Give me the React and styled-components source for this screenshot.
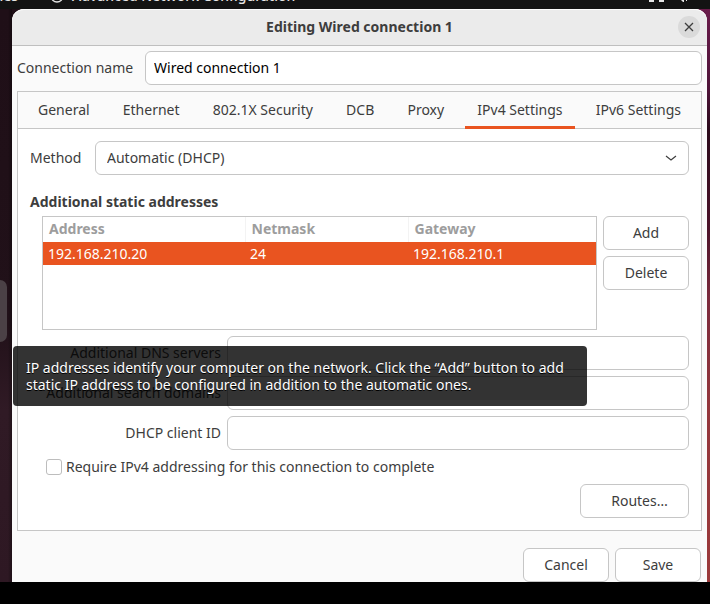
import React from "react";
import styled, { createGlobalStyle } from "styled-components";

const c = {
  text: "#3d3d3d",
  line: "#c6c6c6",
  accent: "#e95420",
  dim: "#9d9d9d",
};

const GlobalStyle = createGlobalStyle`
  * { box-sizing: border-box; }
  body {
    margin: 0;
    background: #000;
    color: ${c.text};
    font: 14px/20px "Noto Sans", "Open Sans", sans-serif;
    overflow: hidden;
  }
  button, input, select { font: inherit; color: inherit; margin: 0; }
`;

const TopBar = styled.header`
  display: flex;
  align-items: flex-end;
  height: 9px;
  overflow: hidden;
  background: #131313;
  color: #e6e6e6;
  font-weight: 500;
  padding-bottom: 3px;
`;

const Activities = styled.span`
  width: 50px;
  direction: rtl;
  padding-right: 32px;
  white-space: nowrap;
`;

const AppName = styled.span`
  display: flex;
  align-items: center;
  gap: 8px;
  flex: 1;
`;

const StatusIcons = styled.span`
  display: flex;
  align-items: flex-end;
  width: 63px;
  height: 20px;
  padding-bottom: 4px;
`;

const Desktop = styled.main`
  display: grid;
  grid-template-columns: 12px minmax(0, 1fr) 3px;
  background:
    linear-gradient(#6a1c4b 0, #4f1439 80px, #2b0a1b 120px, #4b1229 220px, #7b2a3c 290px, #93363b 400px, #9a393a 100%) right / 20px 100% no-repeat,
    linear-gradient(#1f0f17 0, #211119 55%, #301a25 70%, #2e1823 100%);
`;

const Dock = styled.aside`
  padding-top: 271px;
  background: linear-gradient(90deg, transparent 8px, rgba(0, 0, 0, 0.35));
`;

const DockItem = styled.div`
  width: 7px;
  height: 62px;
  border-radius: 0 8px 8px 0;
  background: #4b4146;
`;

const Window = styled.section`
  background: #fafafa;
  border-radius: 12px 12px 0 0;
`;

const TitleBar = styled.div`
  display: grid;
  grid-template-columns: 29px 1fr 29px;
  align-items: center;
  height: 37px;
  border-bottom: 1px solid #bfbfbf;
  border-radius: 12px 12px 0 0;
  background: #ebebeb;
  box-shadow: inset 0 1px #fbfbfb;
`;

const Title = styled.h1`
  grid-column: 2;
  margin: 0;
  text-align: center;
  font-size: 14px;
  line-height: 20px;
  font-weight: 700;
`;

const CloseButton = styled.button`
  display: grid;
  place-items: center;
  width: 22px;
  height: 22px;
  padding: 0;
  border: 0;
  border-radius: 50%;
  background: #dadada;
`;

const NameRow = styled.div`
  display: grid;
  grid-template-columns: 128px 1fr;
  align-items: center;
  padding: 5px 5px 6px;
`;

const Entry = styled.input`
  width: 100%;
  min-width: 0;
  height: 34px;
  padding: 0 8px 2px;
  border: 1px solid ${c.line};
  border-radius: 6px;
  background: #fff;
  color: #000;
`;

const Notebook = styled.div`
  margin: 0 5px;
  border: 1px solid ${c.line};
  background: #fff;
`;

const TabBar = styled.div`
  display: flex;
  justify-content: space-between;
  height: 37px;
  padding: 0 8px;
  border-bottom: 1px solid ${c.line};
  background: #fafafa;
`;

const Tab = styled.button`
  height: 37px;
  padding: 1px 12px 0;
  border: 0;
  border-bottom: 3px solid ${(p) => (p.$active ? c.accent : "transparent")};
  background: none;
  white-space: nowrap;
`;

const Page = styled.div`
  padding: 12px;
`;

const MethodRow = styled.div`
  display: grid;
  grid-template-columns: 65px 1fr;
  align-items: center;
`;

const SelectBox = styled.div`
  display: grid;
  align-items: center;
  & > * { grid-area: 1 / 1; }
  & > svg { justify-self: end; margin-right: 12px; pointer-events: none; }
`;

const Select = styled.select`
  appearance: none;
  height: 34px;
  width: 100%;
  padding: 0 11px;
  border: 1px solid ${c.line};
  border-radius: 6px;
  background: #fff;
`;

const SectionTitle = styled.h2`
  margin: 17px 0 4px;
  font-size: 14px;
  line-height: 20px;
  font-weight: 700;
`;

const AddressArea = styled.div`
  position: relative;
  display: grid;
  grid-template-columns: 1fr 86px;
  gap: 6px;
  margin-left: 12px;
`;

const TableFrame = styled.div`
  height: 114px;
  border: 1px solid ${c.line};
  background: #fff;
`;

const Table = styled.table`
  width: 100%;
  border-collapse: collapse;
  table-layout: fixed;
`;

const HeadCell = styled.th`
  width: ${(p) => p.$width};
  height: 25px;
  padding: 0 6px 2px;
  border-right: 1px solid ${(p) => (p.$last ? "transparent" : "#f3f3f3")};
  color: ${c.dim};
  text-align: left;
  font-weight: 700;
`;

const Cell = styled.td`
  height: 23px;
  padding: 0 5px;
  background: ${c.accent};
  color: #fff;
`;

const ButtonColumn = styled.div`
  display: flex;
  flex-direction: column;
  gap: 6px;
`;

const Button = styled.button`
  height: 34px;
  min-width: 86px;
  padding: ${(p) => (p.$indent ? "0 18px 0 28px" : "0 8px")};
  ${(p) => p.$indent && "min-width: 109px;"}
  border: 1px solid ${c.line};
  border-radius: 6px;
  background: #fff;
`;

const Tooltip = styled.div`
  position: absolute;
  left: -29px;
  top: 130px;
  width: 574px;
  padding: 13px;
  border-radius: 4px;
  background: rgba(0, 0, 0, 0.8);
  color: #fff;
  line-height: 17px;
  text-shadow: 0 1px #000;
  white-space: nowrap;
`;

const Fields = styled.div`
  display: grid;
  grid-template-columns: 191px 1fr;
  gap: 6px;
  align-items: center;
  margin-top: 6px;
`;

const FieldLabel = styled.label`
  text-align: right;
`;

const CheckRow = styled.label`
  display: flex;
  align-items: center;
  gap: 4px;
  margin: 7px 0 7px 16px;
`;

const CheckBox = styled.input`
  appearance: none;
  width: 16px;
  height: 16px;
  border: 1px solid #bdbdbd;
  border-radius: 3px;
  background: #fff;
`;

const Actions = styled.div`
  display: flex;
  justify-content: flex-end;
  gap: 6px;
  padding: ${(p) => (p.$footer ? "17px 6px 0" : "0")};
`;

const tabs = ["General", "Ethernet", "802.1X Security", "DCB", "Proxy", "IPv4 Settings", "IPv6 Settings"];
const fields = [
  ["dns", "Additional DNS servers"],
  ["search", "Additional search domains"],
  ["client", "DHCP client ID"],
];

export default function App() {
  return (
    <>
      <GlobalStyle />
      <TopBar>
        <Activities>Activities</Activities>
        <AppName>
          <svg width="14" height="14" viewBox="0 0 14 14" fill="none" stroke="#e6e6e6" strokeWidth="1.3">
            <circle cx="7" cy="7" r="6" />
            <path d="M7 3v7M4 7l3 3 3-3" />
          </svg>
          Advanced Network Configuration
        </AppName>
        <StatusIcons>
          <svg width="50" height="14" viewBox="0 0 50 14" fill="#e6e6e6">
            <path d="M2 12h5v2H2zM12 12h5v2h-5zM34 10l3 2v2h-1l-2-2zM39 11h1v2h-1z" />
          </svg>
        </StatusIcons>
      </TopBar>
      <Desktop>
        <Dock><DockItem /></Dock>
        <Window>
          <TitleBar>
            <Title>Editing Wired connection 1</Title>
            <CloseButton aria-label="Close">
              <svg width="10" height="10" viewBox="0 0 10 10" fill="none" stroke="#3d3d3d" strokeWidth="1.3">
                <path d="M1 1l8 8M9 1L1 9" />
              </svg>
            </CloseButton>
          </TitleBar>
          <NameRow>
            <label htmlFor="name">Connection name</label>
            <Entry id="name" defaultValue="Wired connection 1" />
          </NameRow>
          <Notebook>
            <TabBar role="tablist">
              {tabs.map((t) => (
                <Tab key={t} role="tab" aria-selected={t === "IPv4 Settings"} $active={t === "IPv4 Settings"}>{t}</Tab>
              ))}
            </TabBar>
            <Page>
              <MethodRow>
                <label htmlFor="method">Method</label>
                <SelectBox>
                  <Select id="method"><option>Automatic (DHCP)</option></Select>
                  <svg width="12" height="8" viewBox="0 0 12 8" fill="none" stroke="#3d3d3d" strokeWidth="1.2">
                    <path d="M1 2l5 4 5-4" />
                  </svg>
                </SelectBox>
              </MethodRow>
              <SectionTitle>Additional static addresses</SectionTitle>
              <AddressArea>
                <TableFrame>
                  <Table>
                    <thead>
                      <tr>
                        <HeadCell $width="202px">Address</HeadCell>
                        <HeadCell $width="163px">Netmask</HeadCell>
                        <HeadCell $last>Gateway</HeadCell>
                      </tr>
                    </thead>
                    <tbody>
                      <tr><Cell>192.168.210.20</Cell><Cell>24</Cell><Cell>192.168.210.1</Cell></tr>
                    </tbody>
                  </Table>
                </TableFrame>
                <ButtonColumn>
                  <Button>Add</Button>
                  <Button>Delete</Button>
                </ButtonColumn>
                <Tooltip role="tooltip">
                  IP addresses identify your computer on the network. Click the “Add” button to add
                  <br />
                  static IP address to be configured in addition to the automatic ones.
                </Tooltip>
              </AddressArea>
              <Fields>
                {fields.map(([id, label]) => (
                  <React.Fragment key={id}>
                    <FieldLabel htmlFor={id}>{label}</FieldLabel>
                    <Entry id={id} />
                  </React.Fragment>
                ))}
              </Fields>
              <CheckRow>
                <CheckBox type="checkbox" />
                Require IPv4 addressing for this connection to complete
              </CheckRow>
              <Actions><Button $indent>Routes…</Button></Actions>
            </Page>
          </Notebook>
          <Actions $footer>
            <Button>Cancel</Button>
            <Button>Save</Button>
          </Actions>
        </Window>
      </Desktop>
    </>
  );
}
